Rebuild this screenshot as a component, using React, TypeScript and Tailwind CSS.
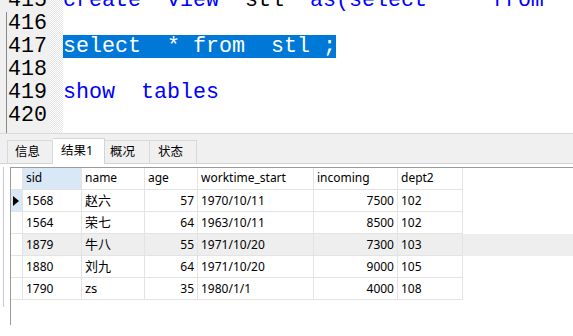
const codeLines = [
  { no: "415", parts: [{ t: "create  view  ", c: "text-[#0000ff]" }, { t: "stl", c: "text-black" }, { t: "  as(select  *  from", c: "text-[#0000ff]" }] },
  { no: "416", parts: [] },
  { no: "417", parts: [{ t: "select  * from  stl ;", c: "text-white bg-[#0078d7]" }] },
  { no: "418", parts: [] },
  { no: "419", parts: [{ t: "show  tables", c: "text-[#0000ff]" }] },
  { no: "420", parts: [] },
];

const tabs = [
  { label: "信息", active: false, cls: "w-[46px] pl-[7px] border-l" },
  { label: "结果1", active: true, cls: "w-[52px] pl-[8px]" },
  { label: "概况", active: false, cls: "w-[45px] pl-[5px]" },
  { label: "状态", active: false, cls: "w-[47px] pl-[8px]" },
];

const cols = [
  { key: "sid", w: "w-[59px]", right: false },
  { key: "name", w: "w-[63px]", right: false },
  { key: "age", w: "w-[53px]", right: true },
  { key: "worktime_start", w: "w-[116px]", right: false },
  { key: "incoming", w: "w-[84px]", right: true },
  { key: "dept2", w: "w-[65px]", right: false },
];

const rows = [
  ["1568", "赵六", "57", "1970/10/11", "7500", "102"],
  ["1564", "荣七", "64", "1963/10/11", "8500", "102"],
  ["1879", "牛八", "55", "1971/10/20", "7300", "103"],
  ["1880", "刘九", "64", "1971/10/20", "9000", "105"],
  ["1790", "zs", "35", "1980/1/1", "4000", "108"],
];

function Editor() {
  return (
    <div className="flex h-[134px] border-b border-[#d9d9d9] overflow-hidden">
      <div className="w-[50px] bg-[#f0f0f0] flex shrink-0">
        <div className="w-[6px] shrink-0" />
        <div className="w-px bg-[#8a8a8a] mt-[12px] shrink-0" />
        <div className="mt-[-11px] pl-[1px]">
          {codeLines.map((l) => (
            <div key={l.no} className="h-[23px] leading-[23px] text-black">
              {l.no}
            </div>
          ))}
        </div>
      </div>
      <div className="w-[13px] shrink-0 bg-[repeating-conic-gradient(#e4e4e4_0_25%,#ffffff_0_50%)] bg-[length:2px_2px]" />
      <div className="flex-1 bg-white mt-[-11px]">
        {codeLines.map((l) => (
          <div key={l.no} className="h-[23px] leading-[23px] whitespace-pre">
            {l.parts.map((p, i) => (
              <span key={i} className={`${p.c} inline-block h-[23px]`}>
                {p.t}
              </span>
            ))}
          </div>
        ))}
      </div>
    </div>
  );
}

function Tabs() {
  return (
    <div className="h-[30px] bg-[#f0f0f0] flex items-end pl-[7px] border-b border-[#d4d4d4]">
      {tabs.map((t) =>
        t.active ? (
          <div
            key={t.label}
            className={`${t.cls} h-[26px] mb-[-1px] bg-white border-t border-r border-[#d4d4d4] pt-[3px] text-[12.5px] text-black`}
          >
            {t.label}
          </div>
        ) : (
          <div
            key={t.label}
            className={`${t.cls} h-[23px] bg-[#f0f0f0] border-t border-r border-[#d9d9d9] pt-[2px] text-[12.5px] text-black`}
          >
            {t.label}
          </div>
        ),
      )}
    </div>
  );
}

function Grid() {
  return (
    <div className="flex">
      <div className="w-[3px] shrink-0" />
      <div className="w-px bg-[#c8c8d4] h-[140px] shrink-0" />
      <div className="w-[6px] shrink-0" />
      <div className="flex-1 h-[158px] border-l border-t border-[#9a9a9a] bg-white">
        <div className="flex h-[22px]">
          <div className="w-[12px] border-r border-b border-[#e3e3e3]" />
          {cols.map((c) => (
            <div
              key={c.key}
              className={`${c.w} h-full border-r border-b border-[#e3e3e3] pl-[3px] leading-[20px] ${c.key === "sid" ? "bg-[#d9e8f7]" : "bg-white"}`}
            >
              {c.key}
            </div>
          ))}
        </div>
        {rows.map((r, ri) => (
          <div key={ri} className={`flex h-[22px] ${ri === 2 ? "bg-[#eeeeee]" : ""}`}>
            <div
              className={`w-[12px] border-r border-b border-[#e3e3e3] flex items-center pl-[2px] ${ri === 0 ? "bg-[#d9e8f7]" : "bg-white"}`}
            >
              {ri === 0 && (
                <svg width="6" height="10" viewBox="0 0 6 10">
                  <path d="M0 0 L6 5 L0 10 Z" fill="#000" />
                </svg>
              )}
            </div>
            {cols.map((c, ci) => (
              <div
                key={c.key}
                className={`${c.w} h-full border-r border-b border-[#e3e3e3] leading-[21px] ${c.right ? "text-right pr-[3px]" : "pl-[3px]"} ${ci === 1 ? "text-[13px]" : ""}`}
              >
                {r[ci]}
              </div>
            ))}
          </div>
        ))}
      </div>
    </div>
  );
}

export default function App() {
  return (
    <div className="w-[573px] h-[336px] overflow-hidden bg-white">
      <div className="font-['Liberation_Mono','DejaVu_Sans_Mono',monospace] text-[21.67px]">
        <Editor />
      </div>
      <div className="font-['Noto_Sans','Noto_Sans_CJK_SC',sans-serif] text-[12px] text-black">
        <Tabs />
        <div className="h-[3px] bg-white" />
        <Grid />
      </div>
    </div>
  );
}
